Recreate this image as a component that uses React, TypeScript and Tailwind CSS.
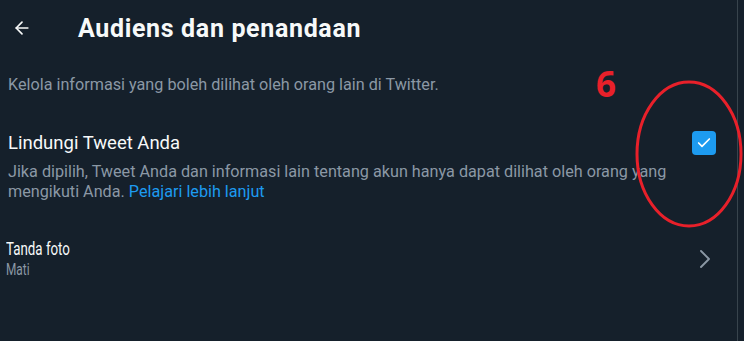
import { ArrowLeft, ChevronRight, Check } from "lucide-react";

export default function App() {
  return (
    <div
      className="relative w-[744px] h-[341px] overflow-hidden bg-[#15202b] text-[#f7f9f9]"
      style={{ fontFamily: 'Roboto, "Liberation Sans", sans-serif' }}
    >
      <div className="w-[738px] h-full border-r border-[#38444d]">
        <header className="flex items-center h-[56px] px-3">
          <ArrowLeft size={20} strokeWidth={2} className="text-[#f7f9f9]" />
          <h1 className="ml-[46px] text-[25px] font-bold leading-none tracking-[0.65px]">Audiens dan penandaan</h1>
        </header>

        <p className="px-2 pt-[19px] text-[16.2px] text-[#8b98a5] leading-[20px]">
          Kelola informasi yang boleh dilihat oleh orang lain di Twitter.
        </p>

        <div className="flex items-center pl-2 pr-[21px] pt-[36px]">
          <div className="flex-1">
            <div className="text-[18.5px] leading-[24px]">Lindungi Tweet Anda</div>
            <p className="mt-[7px] text-[16.2px] text-[#8b98a5] leading-[20px]">
              Jika dipilih, Tweet Anda dan informasi lain tentang akun hanya dapat dilihat oleh orang yang
              mengikuti Anda. <span className="text-[#1d9bf0]">Pelajari lebih lanjut</span>
            </p>
          </div>
          <div className="mb-[47px] w-[24px] h-[24px] rounded-[4px] bg-[#1d9bf0] flex items-center justify-center">
            <Check size={16} strokeWidth={2.5} className="text-white" />
          </div>
        </div>

        <div className="flex items-center pl-[6px] pr-[16px] pt-[35px]">
          <div className="flex-1 flex flex-col">
            <span className="inline-block origin-left scale-x-[0.74] text-[18px] leading-[23px]">Tanda foto</span>
            <span className="inline-block origin-left scale-x-[0.74] text-[16px] text-[#8b98a5] leading-[20px]">Mati</span>
          </div>
          <ChevronRight size={32} strokeWidth={1.4} className="text-[#8b98a5]" />
        </div>
      </div>

      <span
        className="absolute left-[596px] top-[66px] text-[35px] font-bold text-[#e8202a] leading-none"
        style={{ fontFamily: '"Open Sans", sans-serif' }}
      >
        6
      </span>
      <svg className="absolute left-0 top-0" width="744" height="341">
        <ellipse cx="689" cy="154" rx="52" ry="72" fill="none" stroke="#e8202a" strokeWidth="3" />
      </svg>
    </div>
  );
}
